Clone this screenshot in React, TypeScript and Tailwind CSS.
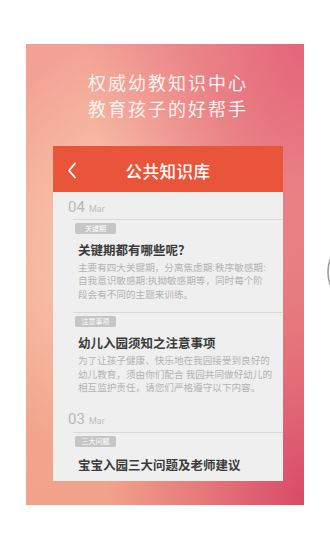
import React from 'react';

const font = { fontFamily: '"Noto Sans CJK SC", "Noto Sans", sans-serif' };

function Tag({ label }: { label: string }) {
  return (
    <div className="w-[41px] h-[11px] rounded-[2px] bg-[#c6c6c6] text-white text-[7px] leading-[11px] text-center">
      {label}
    </div>
  );
}

function DateRow({ day, className }: { day: string; className: string }) {
  return (
    <div className={`flex items-baseline gap-[4px] pl-[15px] ${className}`}>
      <span className="text-[15px] text-[#b8b8b8] font-['Roboto',sans-serif]">{day}</span>
      <span className="text-[9px] text-[#bdbdbd] font-['Roboto',sans-serif]">Mar</span>
    </div>
  );
}

function Item({ tag, title, lines, last }: { tag: string; title: string; lines?: string[]; last?: boolean }) {
  return (
    <div className={`ml-[20px] border-t border-[#d9d9d9] pt-[3px] pl-[2px] ${lines ? 'pb-[11px]' : ''}`}>
      <Tag label={tag} />
      <div className={`${last ? 'mt-[10px]' : 'mt-[8px]'} pl-[3px] text-[12.5px] leading-[16px] font-bold text-[#3b3b3b] whitespace-nowrap`}>
        {title}
      </div>
      {lines && (
        <div className="mt-[3px] pl-[3px] text-[9.6px] leading-[13.4px] text-[#b3b3b3]">
          {lines.map((l) => (
            <div key={l} className="whitespace-nowrap">{l}</div>
          ))}
        </div>
      )}
    </div>
  );
}

export default function App() {
  return (
    <div className="relative w-[330px] h-[550px] bg-white overflow-hidden" style={font}>
      <div className="pt-[44px] pl-[26px]">
        <div className="w-[278px] h-[461px] pl-[27px] bg-[radial-gradient(ellipse_at_100%_100%,#d84a69_0%,rgba(216,74,105,0)_50%),radial-gradient(ellipse_at_100%_0%,#e3657a_0%,rgba(227,101,122,0)_55%),radial-gradient(ellipse_at_35%_45%,#f9cdb3_0%,rgba(249,205,179,0)_60%),linear-gradient(to_bottom,#f3a195,#f3ab93_50%,#f2a28a)]">
          <div className="w-[230px] pt-[25px] text-center text-[18px] leading-[26px] text-[#fdf2ee] tracking-[2px]">
            <div>权威幼教知识中心</div>
            <div>教育孩子的好帮手</div>
          </div>

          <div className="mt-[25px] w-[230px] h-[335px] bg-[#efefef] overflow-hidden">
            <div className="relative h-[46px] bg-[#e9553b] flex items-center justify-center">
              <svg className="absolute left-[14px] top-[16px]" width="10" height="17" viewBox="0 0 10 17">
                <path d="M8 1.5 L2 8.5 L8 15.5" fill="none" stroke="#fff" strokeWidth="1.8" strokeLinecap="round" strokeLinejoin="round" />
              </svg>
              <span className="text-[16.5px] font-medium text-white tracking-[0.5px] mt-[4px]">公共知识库</span>
            </div>

            <DateRow day="04" className="h-[27px] pt-[4px]" />
            <Item
              tag="关键期"
              title="关键期都有哪些呢？"
              lines={['主要有四大关键期，分离焦虑期:秩序敏感期:', '自我意识敏感期:执拗敏感期等，同时每个阶', '段会有不同的主题来训练。']}
            />
            <Item
              tag="注意事项"
              title="幼儿入园须知之注意事项"
              lines={['为了让孩子健康、快乐地在我园接受到良好的', '幼儿教育，须由你们配合 我园共同做好幼儿的', '相互监护责任，请您们严格遵守以下内容。']}
            />
            <DateRow day="03" className="h-[27px] pt-[3px]" />
            <Item tag="三大问题" title="宝宝入园三大问题及老师建议" last />
          </div>
        </div>
      </div>

      <svg className="absolute left-[324px] top-[258px]" width="8" height="28" viewBox="0 0 8 28">
        <path d="M6 2 Q2 14 6 26" fill="none" stroke="#9a9a9a" strokeWidth="1.6" strokeLinecap="round" />
      </svg>
    </div>
  );
}
